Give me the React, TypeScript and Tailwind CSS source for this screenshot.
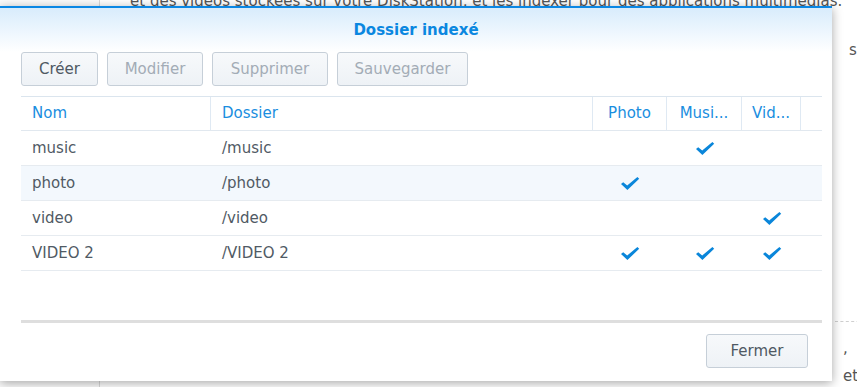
import React from 'react';

const rows = [
  { name: 'music', folder: '/music', photo: false, music: true, video: false },
  { name: 'photo', folder: '/photo', photo: true, music: false, video: false },
  { name: 'video', folder: '/video', photo: false, music: false, video: true },
  { name: 'VIDEO 2', folder: '/VIDEO 2', photo: true, music: true, video: true },
];

function Check() {
  return (
    <svg width="20" height="15" viewBox="0 0 20 15">
      <path d="M1 8 L3.2 6.3 L7.2 9.6 L17.4 1 L19.2 2.8 L7.4 14 Z" fill="#0a86da" />
    </svg>
  );
}

function ToolButton({ label, disabled, width }: { label: string; disabled?: boolean; width: string }) {
  return (
    <button
      className={`flex h-[34px] ${width} items-center justify-center rounded-[3px] border border-[#c6cfd8] bg-gradient-to-b from-[#f7f9fb] to-[#eef2f6] text-[15px] ${disabled ? 'text-[#a3acb6]' : 'text-[#4f5963]'}`}
    >
      {label}
    </button>
  );
}

export default function App() {
  return (
    <div className="relative h-[387px] w-[857px] overflow-hidden bg-white text-[15px]" style={{ fontFamily: '"DejaVu Sans", Verdana, sans-serif' }}>
      {/* page behind the dialog */}
      <div className="absolute left-0 top-0 h-full w-[100px] border-r border-[#d9d9d9] bg-[#fbfbfb]" />
      <div className="absolute left-[130px] top-[-10px] whitespace-nowrap text-[15px] text-[#555]">
        et des vidéos stockées sur votre DiskStation, et les indexer pour des applications multimédias.
      </div>
      <div className="absolute left-[849px] top-[39px] text-[15px] text-[#555]">s</div>
      <div className="absolute left-[835px] top-[321px] w-[30px] border-t border-dashed border-[#cfcfcf]" />
      <div className="absolute left-[843px] top-[337px] text-[15px] text-[#555]">,</div>
      <div className="absolute left-[843px] top-[365px] text-[15px] text-[#555]">et</div>

      {/* dialog */}
      <div className="absolute left-0 top-[6px] flex h-[375px] w-[832px] flex-col border-t-2 border-[#0a87e4] bg-white shadow-[0_2px_10px_rgba(0,0,0,0.35)]">
        <div className="flex h-[44px] justify-center bg-gradient-to-b from-[#d8ecfc] to-white pt-[12px]">
          <span className="text-[15px] font-bold leading-[20px] text-[#0a87e0]">Dossier indexé</span>
        </div>

        <div className="flex gap-[9px] pl-[21px]">
          <ToolButton label="Créer" width="w-[77px]" />
          <ToolButton label="Modifier" disabled width="w-[96px]" />
          <ToolButton label="Supprimer" disabled width="w-[116px]" />
          <ToolButton label="Sauvegarder" disabled width="w-[131px]" />
        </div>

        <div className="ml-[21px] mt-[10px] flex h-[227px] w-[801px] flex-col border-b-[3px] border-t border-b-[#dedede] border-t-[#dbe5ee]">
          <div className="flex h-[34px] border-b border-[#e1e8ef] text-[#1a8ee0]">
            <div className="flex w-[190px] items-center border-r border-[#dfe9f3] pl-[11px]">Nom</div>
            <div className="flex w-[382px] items-center border-r border-[#dfe9f3] pl-[11px]">Dossier</div>
            <div className="flex w-[74px] items-center justify-center border-r border-[#dfe9f3]">Photo</div>
            <div className="flex w-[75px] items-center justify-center border-r border-[#dfe9f3]">Musi...</div>
            <div className="flex w-[59px] items-center justify-center border-r border-[#dfe9f3]">Vid...</div>
            <div className="flex-1" />
          </div>
          {rows.map((r, i) => (
            <div key={r.name} className={`flex h-[35px] border-b border-[#e6ebf0] text-[#505a64] ${i === 1 ? 'bg-[#f3f8fd]' : ''}`}>
              <div className="flex w-[190px] items-center pl-[11px]">{r.name}</div>
              <div className="flex w-[382px] items-center pl-[11px]">{r.folder}</div>
              <div className="flex w-[74px] items-center justify-center">{r.photo && <Check />}</div>
              <div className="flex w-[75px] items-center justify-center">{r.music && <Check />}</div>
              <div className="flex w-[59px] items-center justify-center">{r.video && <Check />}</div>
              <div className="flex-1" />
            </div>
          ))}
        </div>

        <div className="flex justify-end pr-[24px] pt-[11px]">
          <button className="flex h-[34px] w-[102px] items-center justify-center rounded-[3px] border border-[#c6cfd8] bg-gradient-to-b from-[#f7f9fb] to-[#eef2f6] text-[15px] text-[#4f5963]">
            Fermer
          </button>
        </div>
      </div>
    </div>
  );
}
